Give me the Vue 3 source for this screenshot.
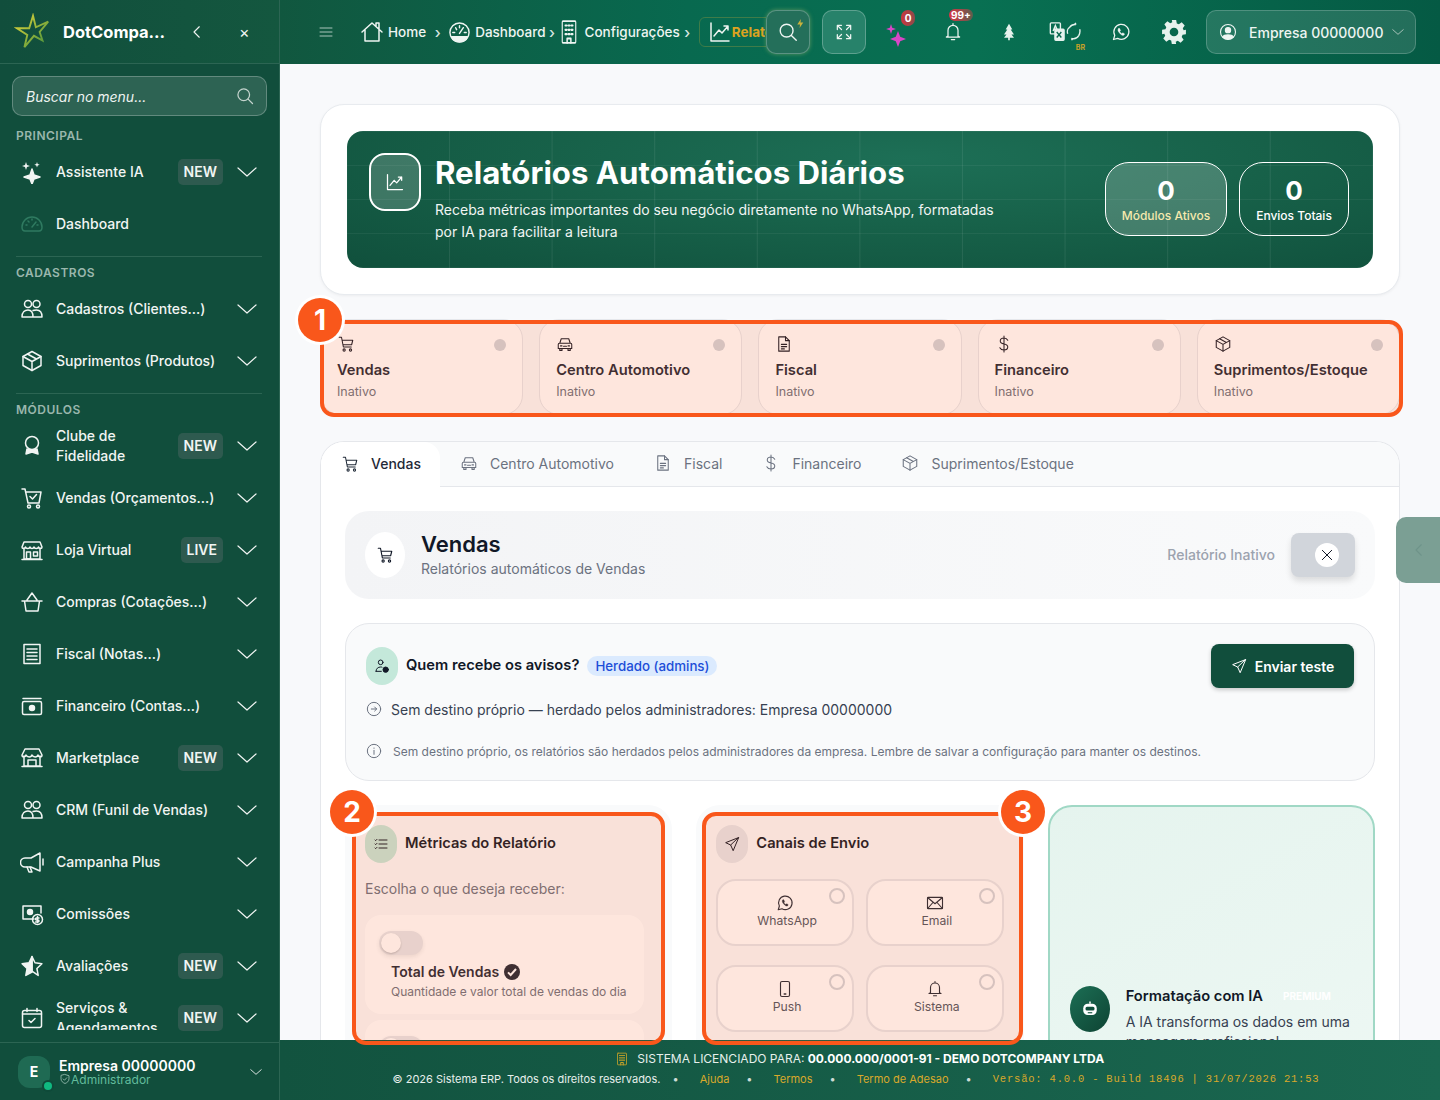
<template>
  <div class="app">
    <aside class="side">
      <div class="side-head">
        <svg class="logo" viewBox="0 0 40 40">
          <defs>
            <linearGradient id="lg" x1="0" y1="0" x2="1" y2="1">
              <stop offset="0" stop-color="#e6d63a" />
              <stop offset="1" stop-color="#3f8f3c" />
            </linearGradient>
          </defs>
          <path d="M20 3 L23 15 L36 9 L27 20 L30 29 L21 24 L11 36 L14 23 L3 16 L16 16 Z" fill="none" stroke="url(#lg)" stroke-width="2" />
        </svg>
        <span class="brand">DotCompany ERP</span>
        <svg class="ic back" viewBox="0 0 24 24" v-html="icons.back"></svg>
        <span class="close">×</span>
      </div>

      <div class="search">
        <span>Buscar no menu...</span>
        <svg class="ic" viewBox="0 0 24 24" v-html="icons.search"></svg>
      </div>

      <nav class="nav">
        <template v-for="g in groups" :key="g.label">
          <div class="group-label">{{ g.label }}</div>
          <div v-for="m in g.items" :key="m.text" class="nav-row">
            <svg class="ic nav-ic" :class="{ dim: m.dim }" viewBox="0 0 24 24" v-html="icons[m.icon]"></svg>
            <span class="nav-text">{{ m.text }}</span>
            <span v-if="m.badge" class="badge">{{ m.badge }}</span>
            <svg v-if="!m.noArrow" class="ic chev" viewBox="0 0 24 24" v-html="icons.chev"></svg>
          </div>
          <div v-if="g.divider" class="nav-div"></div>
        </template>
      </nav>

      <div class="side-user">
        <div class="avatar">E<i></i></div>
        <div class="su-text">
          <div class="su-name">Empresa 00000000</div>
          <div class="su-role">
            <svg class="ic" viewBox="0 0 24 24" v-html="icons.shield"></svg>Administrador
          </div>
        </div>
        <svg class="ic su-chev" viewBox="0 0 24 24" v-html="icons.chev"></svg>
      </div>
    </aside>

    <div class="main">
      <header class="top">
        <svg class="ic burger" viewBox="0 0 24 24" v-html="icons.burger"></svg>
        <div class="crumbs">
          <span class="crumb"><svg class="ic c-home" viewBox="0 0 24 24" v-html="icons.home"></svg>Home</span>
          <span class="sep sep1">›</span>
          <span class="crumb"><svg class="ic c-gauge" viewBox="0 0 24 24" v-html="icons.gaugeFill"></svg>Dashboard</span>
          <span class="sep sep2">›</span>
          <span class="crumb"><svg class="ic c-build" viewBox="0 0 24 24" preserveAspectRatio="none" v-html="icons.building"></svg>Configurações</span>
          <span class="sep sep3">›</span>
          <span class="crumb chip"><svg class="ic c-chart" viewBox="0 0 24 24" v-html="icons.chart"></svg><b>Relatórios</b></span>
        </div>
        <button class="tbtn t-search">
          <svg class="ic" viewBox="0 0 24 24" v-html="icons.search"></svg>
          <svg class="bolt" viewBox="0 0 24 24"><path d="M13 2 5 14h6l-1 8 8-12h-6z" fill="#c9b23c" /></svg>
        </button>
        <button class="tbtn t-expand"><svg class="ic" viewBox="0 0 24 24" v-html="icons.expand"></svg></button>
        <div class="ticon t-first">
          <svg class="stars" viewBox="0 0 24 24"><path d="M13 8l2.2 5.8L21 16l-5.8 2.2L13 24l-2.2-5.8L5 16l5.800-2.200zM6 1l1.200 3.800L11 6 7.200 7.200 6 11 4.800 7.200 1 6l3.800-1.200z" fill="#d946c8" /></svg>
          <span class="dotnum n0">0</span>
        </div>
        <div class="ticon">
          <svg class="ic" viewBox="0 0 24 24" v-html="icons.bell"></svg>
          <span class="dotnum n99">99+</span>
        </div>
        <div class="ticon"><svg class="tree" viewBox="0 0 24 24"><path d="M12 2l4 7h-2l4 6h-3l3 4h-5v3h-2v-3H6l3-4H6l4-6H8z" fill="#e6f2ed" /></svg></div>
        <div class="ticon">
          <svg class="trans" viewBox="0 0 34 24" v-html="icons.translate"></svg>
          <span class="br">BR</span>
        </div>
        <div class="ticon"><svg class="ic" viewBox="0 0 24 24" v-html="icons.whats"></svg></div>
        <div class="ticon t-gear"><svg class="gear" viewBox="0 0 24 24" v-html="icons.gear"></svg></div>
        <div class="userbox">
          <svg class="ic" viewBox="0 0 24 24" v-html="icons.userCircle"></svg>
          <span>Empresa 00000000</span>
          <svg class="ic" viewBox="0 0 24 24" v-html="icons.chev"></svg>
        </div>
      </header>

      <main class="content">
        <section class="hero-card">
          <div class="hero">
            <div class="hero-ic"><svg class="ic" viewBox="0 0 24 24" v-html="icons.chart"></svg></div>
            <div class="hero-text">
              <h1>Relatórios Automáticos Diários</h1>
              <p>Receba métricas importantes do seu negócio diretamente no WhatsApp, formatadas por IA para facilitar a leitura</p>
            </div>
            <div class="stat on"><strong>0</strong><span>Módulos Ativos</span></div>
            <div class="stat"><strong>0</strong><span>Envios Totais</span></div>
          </div>
        </section>

        <section class="mods">
          <div v-for="t in modules" :key="t.name" class="mod">
            <div class="mod-top">
              <svg class="ic" viewBox="0 0 24 24" v-html="icons[t.icon]"></svg>
              <i></i>
            </div>
            <div class="mod-name">{{ t.name }}</div>
            <div class="mod-state">Inativo</div>
          </div>
        </section>

        <section class="panel">
          <div class="tabs">
            <div v-for="(t, i) in modules" :key="t.name" class="tab" :class="{ active: i === 0 }">
              <svg class="ic" viewBox="0 0 24 24" v-html="icons[t.icon]"></svg>{{ t.name }}
            </div>
          </div>

          <div class="panel-body">
            <div class="sec-head">
              <div class="sec-ic"><svg class="ic" viewBox="0 0 24 24" v-html="icons.cart"></svg></div>
              <div class="sec-title">
                <h2>Vendas</h2>
                <p>Relatórios automáticos de Vendas</p>
              </div>
              <span class="sec-state">Relatório Inativo</span>
              <div class="sec-toggle"><span><svg class="ic" viewBox="0 0 24 24" v-html="icons.x"></svg></span></div>
            </div>

            <div class="who">
              <div class="who-top">
                <div class="pill green"><svg class="ic" viewBox="0 0 24 24" v-html="icons.userCheck"></svg></div>
                <strong>Quem recebe os avisos?</strong>
                <span class="tag">Herdado (admins)</span>
                <button class="send"><svg class="ic" viewBox="0 0 24 24" v-html="icons.send"></svg>Enviar teste</button>
              </div>
              <div class="who-line">
                <svg class="ic" viewBox="0 0 24 24" v-html="icons.arrowCircle"></svg>
                Sem destino próprio — herdado pelos administradores: Empresa 00000000
              </div>
              <div class="who-info">
                <svg class="ic" viewBox="0 0 24 24" v-html="icons.info"></svg>
                Sem destino próprio, os relatórios são herdados pelos administradores da empresa. Lembre de salvar a configuração para manter os destinos.
              </div>
            </div>

            <div class="cols">
              <div class="col">
                <div class="col-head">
                  <div class="pill green"><svg class="ic" viewBox="0 0 24 24" v-html="icons.list"></svg></div>
                  <strong>Métricas do Relatório</strong>
                </div>
                <p class="choose">Escolha o que deseja receber:</p>
                <div class="metric">
                  <div class="switch"><i></i></div>
                  <div class="metric-name">
                    Total de Vendas
                    <span class="tick"><svg viewBox="0 0 24 24"><path d="M6 12.500l4 4 8-9" fill="none" stroke="#fff" stroke-width="3" /></svg></span>
                  </div>
                  <div class="metric-sub">Quantidade e valor total de vendas do dia</div>
                </div>
                <div class="metric">
                  <div class="switch"><i></i></div>
                </div>
              </div>

              <div class="col">
                <div class="col-head">
                  <div class="pill lilac"><svg class="ic" viewBox="0 0 24 24" v-html="icons.send"></svg></div>
                  <strong>Canais de Envio</strong>
                </div>
                <div class="channels">
                  <div v-for="c in channels" :key="c.name" class="channel">
                    <svg class="ic" viewBox="0 0 24 24" v-html="icons[c.icon]"></svg>
                    <span>{{ c.name }}</span>
                    <i></i>
                  </div>
                </div>
              </div>

              <div class="col ai">
                <div class="ai-ic"><svg viewBox="0 0 24 24" v-html="icons.robot"></svg></div>
                <div class="ai-text">
                  <div class="ai-title"><strong>Formatação com IA</strong><span>PREMIUM</span></div>
                  <p>A IA transforma os dados em uma mensagem profissional</p>
                </div>
              </div>
            </div>
          </div>
        </section>
      </main>

      <footer class="foot">
        <div class="foot-1">
          <svg class="ic" viewBox="0 0 24 24" preserveAspectRatio="none" v-html="icons.building"></svg>
          SISTEMA LICENCIADO PARA: <b>00.000.000/0001-91 - DEMO DOTCOMPANY LTDA</b>
        </div>
        <div class="foot-2">
          <span>© 2026 Sistema ERP. Todos os direitos reservados.</span><i>•</i>
          <a>Ajuda</a><i>•</i>
          <a>Termos</a><i>•</i>
          <a>Termo de Adesao</a><i>•</i>
          <code>Versão: 4.0.0 - Build 18496 | 31/07/2026 21:53</code>
        </div>
      </footer>
    </div>

    <div class="drawer"><svg class="ic" viewBox="0 0 24 24" v-html="icons.back"></svg></div>

    <!-- annotations over the page -->
    <div class="mark m1"><span>1</span></div>
    <div class="mark m2"><span>2</span></div>
    <div class="mark m3"><span>3</span></div>
  </div>
</template>

<script setup>
const icons = {
  back: '<path d="M15 5l-7 7 7 7"/>',
  chev: '<path d="M3 8l9 8 9-8"/>',
  search: '<circle cx="10.500" cy="10.500" r="7"/><path d="M15.700 15.700L21 21"/>',
  burger: '<path d="M3 6h18M3 12h18M3 18h18"/>',
  sparkles: '<path d="M12 9l2 6 6 2-6 2-2 5-2-5-6-2 6-2z" fill="currentColor"/><path d="M6 2l1 3 3 1-3 1-1 3-1-3-3-1 3-1zM17 2l.7 2 2 .7-2 .7-.7 2-.7-2-2-.7 2-.7z" fill="currentColor" stroke="none"/>',
  gauge: '<path d="M2 15a10 10 0 0 1 20 0c0 2-1 4-3 4H5c-2 0-3-2-3-4z"/><path d="M12 15l4-5M6 13h1M17 13h1M8 9l1 1M12 7v1"/>',
  gaugeFill: '<circle cx="12" cy="12" r="10"/><path d="M12 13l4-6M5 12h2M8 7l1 2M12 5v2M19 12h-2" /><path d="M3.500 16.500h17a9.500 9.500 0 0 1-17 0z" fill="currentColor"/>',
  users: '<circle cx="8" cy="7" r="3.500"/><circle cx="16.500" cy="7" r="3.500"/><path d="M2 20c0-5 3-7 6-7s5 2 5 7zM13 13.500c1-.500 2-.500 3.500-.500 3 0 5.500 2 5.500 7h-9"/>',
  cube: '<path d="M21 16.500v-9L12 2.500 3 7.500v9l9 5z"/><path d="M3 7.500l9 5 9-5M12 12.500v9M7.500 5l9 5"/>',
  medal: '<circle cx="12" cy="9" r="6.500"/><path d="M7 15l-1 5 6-2 6 2-1-5" fill="currentColor"/>',
  cartCheck: '<path d="M2 3h3l3 14h11l2-11H6"/><circle cx="9" cy="20.500" r="1.500"/><circle cx="18" cy="20.500" r="1.500"/><path d="M10 10.500l2.500 2.500 4-4.500"/>',
  store: '<path d="M4 10v11h16V10M2 21.500h20M4 4h16l2 5c0 2-3 2-3.500 0-.500 2-4 2-4.500 0-.500 2-3.500 2-4 0-.500 2-4 2-4.500 0C5 11 2 11 2 9z"/><path d="M6.500 14h4v7h-4zM13.500 14h4v4h-4z"/>',
  basket: '<path d="M2 11h20M4.500 11l1.500 10h12l1.500-10M7 10l5-7 5 7"/>',
  receipt: '<path d="M4 2.500h16v19H4z"/><path d="M7 7h10M7 10.500h10M7 14h10M7 17.500h10"/>',
  cash: '<path d="M3 4.500h18"/><rect x="2.500" y="7.500" width="19" height="13" rx="1.500"/><circle cx="12" cy="14" r="2.500" fill="currentColor"/>',
  market: '<path d="M4 10v10h16V10M2 20.500h20M5 3h14l3 6c0 2.500-3.500 2.500-4 0-.500 2.500-5 2.500-6 0-.500 2.500-5 2.500-6 0-.500 2.500-4 2.500-4 0z"/><path d="M8 20v-6h8v6"/>',
  megaphone: '<path d="M20 3v18l-9-4H5a3 3 0 0 1 0-9h6z"/><path d="M7 17l2 5h3l-2-5M23 9v6"/>',
  commission: '<path d="M14 17H3V4h18v7"/><circle cx="10" cy="10" r="2.500" fill="currentColor"/><circle cx="17.500" cy="17.500" r="5"/><path d="M19 16h-2.500a1 1 0 0 0 0 2h1.500a1 1 0 0 1 0 2h-2.500M17.500 14.500v6"/>',
  star: '<path d="M12 2.500l3 6.300 6.900.900-5 4.800 1.300 6.900L12 17.200V2.500z"/><path d="M12 2.500l-3 6.300-6.900.900 5 4.800-1.300 6.900 6.200-3.200z" fill="currentColor"/>',
  calendar: '<rect x="2.500" y="4.500" width="19" height="17" rx="2"/><path d="M2.500 8h19M7 2.500v3M17 2.500v3M9 14.500l2 2 4-4"/>',
  shield: '<path d="M12 3l8 2.500v6c0 5-4 8-8 9.500-4-1.500-8-4.500-8-9.500v-6z"/><path d="M8.500 12l2.500 2.500 4.500-5"/>',
  home: '<path d="M2 12L12 3l10 9M5 10v11h14V10M16 6V3h3v6"/>',
  building: '<rect x="3" y="2" width="18" height="20" rx="1"/><path d="M7 6h2M11 6h2M15 6h2M7 10h2M11 10h2M15 10h2M7 14h2M11 14h2M15 14h2M9.500 22v-4h5v4" stroke-width="2"/>',
  chart: '<path d="M3 3v18h18M6 16l5-6 3 3 6-7M16 6h4v4"/>',
  expand: '<path d="M4 9V4h5M4 4l5 5M20 9V4h-5M20 4l-5 5M4 15v5h5M4 20l5-5M20 15v5h-5M20 20l-5-5"/>',
  bell: '<path d="M6 17V10a6 6 0 0 1 12 0v7l2 1H4zM10 21h4M12 4V2"/>',
  translate: '<rect x="1" y="2" width="11" height="12" rx="1" /><path d="M4 11l2.500-6L9 11M5 9h3"/><rect x="6" y="9" width="10" height="12" rx="1" fill="#e6f2ed"/><path d="M8 12l5 6M13 12l-5 6" stroke="#08684e"/><path d="M22 7a7 7 0 0 1 7-3M29 4l-1-2M32 16a7 7 0 0 1-8 3M24 19l1 2M20 14c-1-3 0-6 2-7M33 9c1 3 0 5-1 7"/>',
  whats: '<path d="M3 21l1.500-5A9 9 0 1 1 8 19.600z"/><path d="M9 8c-1 1-1 2.500 1 5s4 3.500 5 3 1.500-1.500 1-2l-2-1-1 1c-1-.500-2-1.500-2.500-2.500l1-1-1-2.500c-.500-.500-1-.500-1.500 0z" fill="currentColor" stroke-width="0.500"/>',
  gear: '<path fill="currentColor" stroke="none" fill-rule="evenodd" d="M10 1h4l.6 3.100 1.900.8 2.600-1.800 2.800 2.800-1.800 2.600.8 1.900L23 10v4l-3.100.6-.8 1.900 1.800 2.600-2.800 2.800-2.600-1.800-1.900.8L14 23h-4l-.6-3.100-1.900-.8-2.600 1.800-2.800-2.800 1.800-2.600-.8-1.900L1 14v-4l3.100-.6.8-1.900L3.100 4.900l2.800-2.800 2.600 1.800 1.900-.8zM12 8a4 4 0 1 0 0 8 4 4 0 0 0 0-8z"/>',
  userCircle: '<circle cx="12" cy="12" r="10"/><circle cx="12" cy="9.500" r="3.500" fill="currentColor"/><path d="M5 18.500c2-3.500 12-3.500 14 0-3.500 4-10.500 4-14 0z" fill="currentColor"/>',
  cart: '<path d="M3 3h3l2.500 13h10.500M7 7h14l-1.500 6H8"/><circle cx="9.500" cy="20" r="1.500"/><circle cx="18" cy="20" r="1.500"/>',
  car: '<path d="M5 11l2-6h10l2 6M3 12.500A1.500 1.500 0 0 1 4.500 11h15a1.500 1.500 0 0 1 1.500 1.500V18H3zM5 18v2.500h3V18M16 18v2.500h3V18M6 14.500h2M16 14.500h2M10 15h4"/>',
  file: '<path d="M5 2.500h9l5 5v14H5z"/><path d="M14 2.500v5h5M8.500 12.500h7M8.500 15.500h7M8.500 18.500h4"/>',
  dollar: '<path d="M17 7c-1-2-3-3-5-3-3 0-5 1.500-5 4s2 3.500 5 4 5 1.500 5 4-2 4-5 4c-2.500 0-4.500-1-5.500-3M12 1.500v21"/>',
  x: '<path d="M5 5l14 14M19 5L5 19"/>',
  userCheck: '<circle cx="10" cy="6.500" r="3.500"/><path d="M3 20c0-4 3-6.500 7-6.500 1 0 1.500 0 2 .3M3 20h8"/><circle cx="17.500" cy="17.500" r="4" fill="currentColor"/>',
  send: '<path d="M21.500 2.500L2.500 10l7.500 3.500 3.500 8zM10 13.500l11.500-11"/>',
  arrowCircle: '<circle cx="12" cy="12" r="10"/><path d="M8 12h8M13 9l3 3-3 3"/>',
  info: '<circle cx="12" cy="12" r="10"/><path d="M12 11v6M12 7.500v.500"/>',
  list: '<path d="M9 6h12M9 12h12M9 18h12M3 6l1 1 2-2M3 12l1 1 2-2M3 18l1 1 2-2"/>',
  phone: '<rect x="6" y="2" width="12" height="20" rx="2"/><path d="M11 18.500h2" stroke-width="2"/>',
  mail: '<rect x="2" y="4.500" width="20" height="15" rx="1"/><path d="M2.500 5l9.500 8 9.500-8M2.500 19l7-8M21.500 19l-7-8"/>',
  robot: '<path fill="#fff" d="M11 2h2v3h-2z"/><rect fill="#fff" x="3" y="5" width="18" height="15" rx="6"/><rect fill="#0f4f3b" x="6" y="9" width="12" height="5" rx="2"/><path d="M9 17h6" stroke="#0f4f3b" stroke-width="1.500"/>',
}

const groups = [
  { label: 'PRINCIPAL', divider: true, items: [
    { text: 'Assistente IA', icon: 'sparkles', badge: 'NEW' },
    { text: 'Dashboard', icon: 'gauge', noArrow: true, dim: true },
  ] },
  { label: 'CADASTROS', divider: true, items: [
    { text: 'Cadastros (Clientes...)', icon: 'users' },
    { text: 'Suprimentos (Produtos)', icon: 'cube' },
  ] },
  { label: 'MÓDULOS', items: [
    { text: 'Clube de Fidelidade', icon: 'medal', badge: 'NEW' },
    { text: 'Vendas (Orçamentos...)', icon: 'cartCheck' },
    { text: 'Loja Virtual', icon: 'store', badge: 'LIVE' },
    { text: 'Compras (Cotações...)', icon: 'basket' },
    { text: 'Fiscal (Notas...)', icon: 'receipt' },
    { text: 'Financeiro (Contas...)', icon: 'cash' },
    { text: 'Marketplace', icon: 'market', badge: 'NEW' },
    { text: 'CRM (Funil de Vendas)', icon: 'users' },
    { text: 'Campanha Plus', icon: 'megaphone' },
    { text: 'Comissões', icon: 'commission' },
    { text: 'Avaliações', icon: 'star', badge: 'NEW' },
    { text: 'Serviços & Agendamentos', icon: 'calendar', badge: 'NEW' },
  ] },
]

const modules = [
  { name: 'Vendas', icon: 'cart' },
  { name: 'Centro Automotivo', icon: 'car' },
  { name: 'Fiscal', icon: 'file' },
  { name: 'Financeiro', icon: 'dollar' },
  { name: 'Suprimentos/Estoque', icon: 'cube' },
]

const channels = [
  { name: 'WhatsApp', icon: 'whats' },
  { name: 'Email', icon: 'mail' },
  { name: 'Push', icon: 'phone' },
  { name: 'Sistema', icon: 'bell' },
]
</script>

<style>
html, body { margin: 0; background: #f8f9fb; }
</style>

<style scoped>
* { box-sizing: border-box; }
.app { display: flex; width: 1440px; height: 1100px; overflow: hidden; position: relative; font-family: Inter, "Noto Sans", sans-serif; color: #111827; }
.ic { width: 24px; height: 24px; flex: none; fill: none; stroke: currentColor; stroke-width: 1.5; stroke-linecap: round; stroke-linejoin: round; }

/* sidebar */
.side { width: 280px; flex: none; height: 1100px; background: #114e3c; border-right: 1px solid #2c6553; display: flex; flex-direction: column; color: #f1f5f3; }
.side-head { height: 64px; flex: none; display: flex; align-items: center; padding: 0 0 0 14px; border-bottom: 1px solid #2c6553; background: linear-gradient(90deg, #114e3c, #14573f); }
.logo { width: 38px; height: 38px; flex: none; }
.brand { width: 111px; margin-left: 11px; font-size: 16.500px; font-weight: 700; color: #fff; white-space: nowrap; overflow: hidden; text-overflow: ellipsis; }
.back { width: 18px; height: 18px; margin-left: 14px; }
.close { font-size: 16px; margin-left: 33px; line-height: 18px; }
.search { margin: 12px 12px 0; height: 40px; flex: none; width: 255px; border: 1px solid rgba(255, 255, 255, .25); border-radius: 10px; background: rgba(255, 255, 255, .12); display: flex; align-items: center; justify-content: space-between; padding: 0 11px 0 13px; font-size: 14px; font-style: italic; color: #eef3f1; }
.search .ic { width: 20px; height: 20px; color: #c5d4ce; }
.nav { height: 917px; margin-bottom: 9px; overflow: hidden; padding-top: 12px; flex: none; }
.group-label { font-size: 12px; font-weight: 600; color: #9ab7ad; letter-spacing: .5px; padding-left: 16px; line-height: 15px; height: 15px; margin-bottom: 3px; }
.nav-row { height: 52px; display: flex; align-items: center; padding-left: 20px; padding-right: 21px; font-size: 14px; font-weight: 500; line-height: 20px; color: #f1f5f3; }
.nav-ic { width: 24px; height: 24px; margin-right: 12px; }
.nav-ic.dim { color: #2f7a60; }
.nav-text { flex: 1; min-width: 0; padding-right: 8px; overflow: hidden; max-height: 40px; }
.nav-row:last-child .nav-text { max-height: 32px; align-self: flex-start; margin-top: 6px; }
.badge { height: 26px; line-height: 26px; padding: 0 6px; border-radius: 5px; background: #2e5a4f; font-size: 14px; font-weight: 600; margin-right: 12px; }
.chev { width: 24px; height: 24px; margin-left: auto; margin-right: -1px; stroke-width: 1.200; }
.nav-div { height: 1px; background: #2c6553; margin: 6px 17px 8px 16px; }
.side-user { flex: 1; border-top: 1px solid #2c6553; display: flex; align-items: center; padding: 0 16px 0 18px; position: relative; z-index: 1; }
.avatar { width: 32px; height: 32px; border-radius: 12px; background: #1f6a53; font-size: 14px; font-weight: 700; display: flex; align-items: center; justify-content: center; position: relative; color: #fff; }
.avatar i { position: absolute; right: -2px; bottom: -2px; width: 8px; height: 8px; border-radius: 50%; background: #10b981; box-shadow: 0 0 0 2px #0f4a39; }
.su-text { margin-left: 9px; flex: 1; }
.su-name { font-size: 14px; font-weight: 600; line-height: 15px; color: #fff; white-space: nowrap; }
.su-role { display: flex; align-items: center; font-size: 12px; line-height: 13px; color: #62bd9c; }
.su-role .ic { width: 12px; height: 12px; color: #a9ccc0; }
.su-chev { width: 14px; height: 14px; }

/* top bar */
.main { flex: 1; min-width: 0; display: flex; flex-direction: column; background: #f8f9fb; }
.top { height: 64px; flex: none; display: flex; align-items: center; padding-right: 24px; background: linear-gradient(90deg, #11573f 0%, #08694f 35%, #087052 60%, #055a44 100%); color: #eef5f2; }
.burger { width: 16px; height: 16px; margin-left: 38px; color: #c3d6ce; stroke-width: 1.300; }
.crumbs { width: 406px; margin-left: 26px; display: flex; align-items: center; overflow: hidden; font-size: 13.500px; font-weight: 500; white-space: nowrap; flex: none; }
.crumb { display: flex; align-items: center; gap: 4px; }
.c-home { width: 24px; height: 24px; }
.c-gauge { width: 23px; height: 23px; }
.c-build { width: 18px; height: 26px; margin-right: 3px; }
.c-chart { width: 24px; height: 24px; }
.sep { width: 9px; flex: none; font-size: 15px; text-align: center; color: #d8e5e0; }
.sep1 { margin: 0 6px 0 7px; }
.sep2 { margin: 0 3px 0 2px; }
.sep3 { margin: 0 0 0 3px; }
.chip { margin-left: 7px; padding: 0 0 0 8px; height: 30px; gap: 0; border: 1px solid #3f7c49; border-radius: 6px; }
.chip b { color: #dca320; font-weight: 700; }
.tbtn { position: relative; width: 44px; height: 44px; border-radius: 10px; border: 1px solid rgba(255, 255, 255, .25); background: #27826a; color: #eef5f2; padding: 0; display: flex; align-items: center; justify-content: center; flex: none; }
.t-search { background: #246f5a; box-shadow: 0 0 4px rgba(170, 190, 110, .5); }
.t-search .ic { width: 22px; height: 22px; }
.bolt { position: absolute; right: 3px; top: 7px; width: 11px; height: 11px; }
.t-expand { margin-left: 12px; }
.t-expand .ic { width: 20px; height: 20px; }
.ticon { width: 44px; height: 44px; flex: none; margin-left: 12px; position: relative; display: flex; align-items: center; justify-content: center; }
.ticon .ic { width: 20px; height: 20px; }
.t-first { margin-left: 9px; }
.stars { width: 24px; height: 24px; margin-top: 5px; }
.tree { width: 20px; height: 20px; }
.trans { width: 32px; height: 22px; fill: none; stroke: #e6f2ed; stroke-width: 1.500; }
.gear { width: 26px; height: 26px; fill: #e6f2ed; color: #e6f2ed; }
.t-gear { margin-left: 9px; }
.dotnum { position: absolute; background: linear-gradient(90deg, #dc3545, #5c5f4e); color: #fff; font-size: 10px; font-weight: 700; border-radius: 9px; line-height: 15px; text-align: center; }
.n0 { width: 14px; height: 16px; left: 26px; top: 0; background: linear-gradient(90deg, #c9373f, #8d4a4a); border-radius: 7px; line-height: 16px; }
.n99 { width: 24px; height: 12px; line-height: 12px; left: 18px; top: -1px; }
.br { position: absolute; right: 2px; bottom: 2px; font-size: 7px; font-weight: 700; color: #c9a227; }
.userbox { margin-left: 10px; width: 210px; height: 44px; flex: none; border: 1px solid rgba(255, 255, 255, .2); border-radius: 10px; background: rgba(255, 255, 255, .12); display: flex; align-items: center; padding: 0 12px; font-size: 14px; font-weight: 500; white-space: nowrap; }
.userbox .ic:first-child { width: 18px; height: 18px; margin-right: 12px; }
.userbox .ic:last-child { width: 14px; height: 14px; margin-left: 8px; color: #b7cbc3; }

/* content */
.content { flex: 1; min-height: 0; overflow: hidden; padding: 40px; }
.hero-card { background: #fff; border: 1px solid #e8ebef; border-radius: 24px; padding: 26px 26px; box-shadow: 0 1px 3px rgba(0, 0, 0, .05); }
.hero { height: 137px; border-radius: 16px; display: flex; align-items: flex-start; padding: 22px 24px 22px 22px; color: #fff; background-color: #11503d;
  background-image: linear-gradient(rgba(255, 255, 255, .05) 1px, transparent 1px), linear-gradient(90deg, rgba(255, 255, 255, .08) 1px, transparent 1px), radial-gradient(ellipse at 55% 20%, #1d6f56 0%, #176149 45%, #10503c 100%);
  background-size: 100% 34px, 10% 100%, 100% 100%;
  background-position: 0 0, 102px 0, 0 0; }
.hero-ic { width: 52px; height: 58px; border: 2px solid #fff; border-radius: 16px; background: rgba(255, 255, 255, .18); display: flex; align-items: center; justify-content: center; flex: none; }
.hero-ic .ic { width: 20px; height: 20px; }
.hero-text { margin-left: 14px; width: 570px; flex: none; }
h1 { margin: 0; font-size: 31.200px; font-weight: 700; line-height: 40px; white-space: nowrap; }
.hero p { margin: 6px 0 0; font-size: 14px; line-height: 22px; color: #f0f5f3; }
.stat { margin-top: 9px; height: 74px; width: 110px; border: 1.500px solid #fff; border-radius: 24px; text-align: center; padding-top: 13px; flex: none; margin-left: 12px; }
.stat.on { width: 122px; margin-left: auto; background: rgba(255, 255, 255, .2); }
.stat strong { display: block; font-size: 26px; line-height: 30px; font-weight: 700; }
.stat span { display: block; font-size: 12px; line-height: 19px; font-weight: 500; }
.stat.on span { color: #f5e9ae; }

.mods { margin-top: 24px; display: grid; grid-template-columns: repeat(5, 1fr); gap: 16px; }
.mod { height: 96px; background: #fff; border: 1px solid #e5e7eb; border-radius: 20px; padding: 15px 16px 0; }
.mod-top { height: 18px; display: flex; align-items: center; justify-content: space-between; }
.mod-top .ic { width: 18px; height: 18px; stroke-width: 1.400; }
.mod-top i { width: 12px; height: 12px; border-radius: 50%; background: #d1d5db; margin-top: 2px; }
.mod-name { margin-top: 7px; font-size: 14.700px; font-weight: 600; line-height: 20px; white-space: nowrap; color: #1f2937; }
.mod-state { margin-top: 4px; font-size: 12.500px; line-height: 16px; color: #6b7280; }

.panel { margin-top: 26px; background: #fff; border: 1px solid #e5e7eb; border-bottom: 0; border-radius: 24px 24px 0 0; overflow: hidden; }
.tabs { display: flex; height: 45px; background: #f9fafb; border-bottom: 1px solid #e5e7eb; }
.tab { display: flex; align-items: center; gap: 12px; padding: 0 20px 2px; font-size: 14px; color: #6b7280; }
.tab .ic { width: 18px; height: 18px; stroke-width: 1.400; }
.tab.active { background: #fff; color: #1f2937; font-weight: 500; height: 45px; border-radius: 16px 16px 0 0; padding-right: 19px; }
.panel-body { padding: 24px; }

.sec-head { height: 88px; border-radius: 24px; background: linear-gradient(90deg, #f3f4f6, #f9fafb); display: flex; align-items: center; padding: 0 20px; }
.sec-ic { width: 40px; height: 46px; border-radius: 50%; background: #fff; display: flex; align-items: center; justify-content: center; }
.sec-ic .ic { width: 18px; height: 18px; }
.sec-title { flex: 1; margin-left: 16px; margin-top: -2px; }
h2 { margin: 0; font-size: 22px; font-weight: 600; line-height: 28px; color: #111827; }
.sec-title p { margin: 1px 0 0; font-size: 14px; line-height: 20px; color: #6b7280; }
.sec-state { font-size: 14px; font-weight: 500; color: #9ca3af; margin-right: 16px; margin-top: -2px; }
.sec-toggle { width: 64px; height: 44px; border-radius: 8px; background: #d1d5db; display: flex; align-items: center; justify-content: flex-end; padding-right: 16px; box-shadow: 0 4px 6px rgba(0, 0, 0, .12); }
.sec-toggle span { width: 24px; height: 24px; border-radius: 50%; background: #fff; display: flex; align-items: center; justify-content: center; }
.sec-toggle .ic { width: 16px; height: 16px; }

.who { margin-top: 24px; height: 158px; background: #f9fafb; border: 1px solid #e5e7eb; border-radius: 24px; padding: 20px; }
.who-top { height: 44px; display: flex; align-items: center; }
.pill { width: 32px; height: 38px; border-radius: 16px; display: flex; align-items: center; justify-content: center; flex: none; }
.pill .ic { width: 16px; height: 16px; }
.green { background: #c4e8da; }
.lilac { background: #e5e7eb; }
.who-top strong, .col-head strong { margin-left: 8px; margin-top: -2px; font-size: 14.700px; font-weight: 600; color: #111827; }
.tag { margin-left: 8px; height: 20px; line-height: 20px; border-radius: 10px; background: #dbeafe; color: #1d4ed8; font-size: 13.300px; font-weight: 500; padding: 0 8px; white-space: nowrap; }
.send { margin-left: auto; width: 143px; height: 44px; border: 0; border-radius: 8px; background: #114e3c; color: #fff; font: 600 14px Inter, sans-serif; display: flex; align-items: center; justify-content: center; gap: 8px; box-shadow: 0 2px 4px rgba(0, 0, 0, .2); }
.send .ic { width: 16px; height: 16px; }
.who-line { margin-top: 11px; display: flex; align-items: center; gap: 9px; height: 20px; font-size: 14px; color: #374151; }
.who-line .ic { width: 16px; height: 16px; color: #6b7280; }
.who-info { margin-top: 23px; display: flex; align-items: center; gap: 11px; height: 18px; font-size: 12px; color: #6b7280; }
.who-info .ic { width: 16px; height: 16px; }

.cols { margin-top: 24px; display: grid; grid-template-columns: repeat(3, 1fr); gap: 24px; }
.col { height: 500px; background: #f9fafb; border-radius: 24px; padding: 20px; }
.col-head { display: flex; align-items: center; height: 38px; }
.choose { margin: 16px 0; font-size: 14px; line-height: 20px; color: #6b7280; }
.metric { height: 99px; width: 279px; margin-bottom: 6px; background: #fff; border-radius: 16px; padding: 16px 14px; }
.switch { width: 44px; height: 24px; border-radius: 12px; background: #e5e7eb; padding: 2px; box-shadow: 0 2px 4px rgba(0, 0, 0, .08); }
.switch i { display: block; width: 20px; height: 20px; border-radius: 50%; background: #fff; box-shadow: 0 1px 2px rgba(0, 0, 0, .2); }
.metric-name { margin: 7px 0 0 12px; display: flex; align-items: center; gap: 5px; font-size: 14px; font-weight: 600; line-height: 20px; color: #1f2937; }
.tick { width: 16px; height: 16px; border-radius: 50%; background: #1f2937; display: flex; }
.metric-sub { margin: 2px 0 0 12px; font-size: 12px; line-height: 16px; color: #6b7280; white-space: nowrap; }

.channels { margin-top: 16px; display: grid; grid-template-columns: 1fr 1fr; gap: 19px 12px; }
.channel { position: relative; height: 67px; background: #fff; border: 2px solid #e5e7eb; border-radius: 20px; display: flex; flex-direction: column; align-items: center; justify-content: center; font-size: 12.200px; line-height: 16px; color: #4b5563; padding-bottom: 2px; }
.channel span { padding-left: 4px; }
.channel .ic { width: 18px; height: 18px; color: #1f2937; margin-bottom: 1px; }
.channel i { position: absolute; top: 7px; right: 7px; width: 16px; height: 16px; border-radius: 50%; border: 2px solid #d1d5db; }

.ai { display: flex; align-items: flex-start; gap: 16px; background: linear-gradient(150deg, #e5f4ee, #f1f9f6); border: 2px solid #a0d8c5; padding: 179px 18px 0 20px; }
.ai-ic { width: 40px; height: 46px; flex: none; border-radius: 50%; background: linear-gradient(135deg, #1c6f55, #0e4433); display: flex; align-items: center; justify-content: center; }
.ai-ic svg { width: 18px; height: 18px; }
.ai-title { display: flex; align-items: center; height: 20px; }
.ai-title strong { font-size: 14.700px; font-weight: 600; color: #111827; }
.ai-title span { margin-left: 20px; font-size: 10px; font-weight: 700; color: #fff; }
.ai-text p { margin: 6px 0 0; font-size: 14px; line-height: 20px; color: #374151; }

.foot { position: relative; height: 60px; flex: none; background: linear-gradient(90deg, #12533f, #1a6750); color: #e7efec; text-align: center; }
.foot-1 { display: flex; align-items: center; justify-content: center; height: 19px; margin-top: 9px; position: absolute; left: 0; right: 0; font-size: 12px; white-space: pre; }
.foot-1 .ic { width: 12px; height: 14px; margin-right: 6px; color: #c9a227; }
.foot-1 b { font-weight: 700; color: #fff; }
.foot-2 { display: flex; align-items: center; justify-content: center; position: absolute; top: 30px; left: 0; right: 8px; height: 18px; font-size: 11px; white-space: nowrap; }
.foot-2 span { margin-right: -5px; }
.foot-2 i { font-style: normal; margin: 0 21px 0 17px; color: #cfdcd7; }
.foot-2 a { color: #d9a92b; }
.foot-2 code { font-family: "Liberation Mono", monospace; font-size: 10.500px; letter-spacing: .8px; color: #d9a92b; }

.drawer { position: absolute; left: 1396px; top: 517px; width: 44px; height: 66px; background: #7b9f94; border-radius: 10px 0 0 10px; color: #6f948a; display: flex; align-items: center; padding-left: 14px; z-index: 3; }
.drawer .ic { width: 18px; height: 18px; }

/* numbered highlights */
.mark { position: absolute; border: 4px solid #f9571b; background: rgba(249, 87, 27, .15); border-radius: 14px; z-index: 5; pointer-events: none; }
.mark span { position: absolute; width: 44px; height: 44px; border-radius: 50%; background: #f9571b; color: #fff; font-size: 28px; font-weight: 700; display: flex; align-items: center; justify-content: center; box-shadow: 0 0 0 3px #fff; }
.m1 { left: 320px; top: 320px; width: 1083px; height: 97px; }
.m1 span { left: -26px; top: -26px; }
.m2 { left: 352px; top: 812px; width: 313px; height: 233px; }
.m2 span { left: -26px; top: -26px; }
.m3 { left: 702px; top: 812px; width: 321px; height: 233px; }
.m3 span { right: -26px; top: -26px; }
</style>
